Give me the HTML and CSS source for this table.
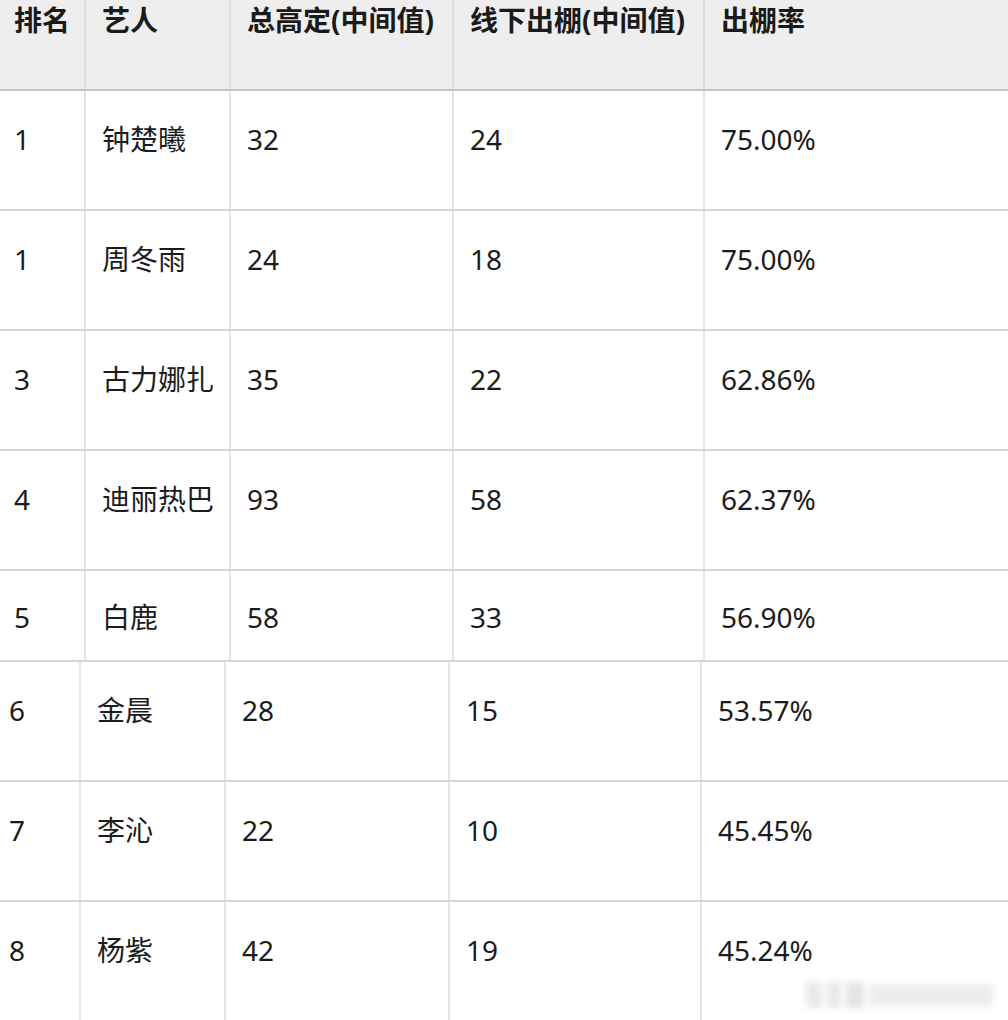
FILE: index.html
```html
<!DOCTYPE html>
<html lang="zh-CN">
<head>
<meta charset="utf-8">
<title>出棚率排名</title>
<link rel="stylesheet" href="styles.css">
</head>
<body>
<div class="page">
  <div class="table table-top">
    <div class="row head">
      <div class="cell">排名</div>
      <div class="cell">艺人</div>
      <div class="cell">总高定(中间值)</div>
      <div class="cell">线下出棚(中间值)</div>
      <div class="cell">出棚率</div>
    </div>
    <div class="row">
      <div class="cell">1</div><div class="cell">钟楚曦</div><div class="cell">32</div><div class="cell">24</div><div class="cell">75.00%</div>
    </div>
    <div class="row">
      <div class="cell">1</div><div class="cell">周冬雨</div><div class="cell">24</div><div class="cell">18</div><div class="cell">75.00%</div>
    </div>
    <div class="row">
      <div class="cell">3</div><div class="cell">古力娜扎</div><div class="cell">35</div><div class="cell">22</div><div class="cell">62.86%</div>
    </div>
    <div class="row">
      <div class="cell">4</div><div class="cell">迪丽热巴</div><div class="cell">93</div><div class="cell">58</div><div class="cell">62.37%</div>
    </div>
    <div class="row short">
      <div class="cell">5</div><div class="cell">白鹿</div><div class="cell">58</div><div class="cell">33</div><div class="cell">56.90%</div>
    </div>
  </div>
  <div class="table table-bottom">
    <div class="row">
      <div class="cell">6</div><div class="cell">金晨</div><div class="cell">28</div><div class="cell">15</div><div class="cell">53.57%</div>
    </div>
    <div class="row">
      <div class="cell">7</div><div class="cell">李沁</div><div class="cell">22</div><div class="cell">10</div><div class="cell">45.45%</div>
    </div>
    <div class="row">
      <div class="cell">8</div><div class="cell">杨紫</div><div class="cell">42</div><div class="cell">19</div><div class="cell">45.24%</div>
    </div>
  </div>
  <div class="watermark" aria-hidden="true">
    <span class="wm wm1"></span><span class="wm wm2"></span><span class="wm wm3"></span><span class="wm wm4"></span>
  </div>
</div>
</body>
</html>
```

FILE: styles.css
```css
html, body {
  margin: 0;
  padding: 0;
  background: #ffffff;
}
body {
  font-family: "Noto Sans", "Noto Sans CJK SC", sans-serif;
  color: #1c1c1c;
  font-size: 28px;
}
.page {
  position: relative;
  width: 1008px;
  height: 1020px;
  overflow: hidden;
}
.row {
  display: grid;
  box-sizing: border-box;
  height: 120px;
  border-bottom: 2px solid #d6d6d6;
}
.table-top .row {
  grid-template-columns: 86px 145px 223px 251px 1fr;
}
.table-bottom .row {
  grid-template-columns: 81px 145px 224px 252px 1fr;
}
.cell {
  box-sizing: border-box;
  padding: 29px 0 0 16px;
  line-height: 38px;
  border-right: 2px solid #e6e6e6;
  white-space: nowrap;
  overflow: hidden;
}
.cell:last-child {
  border-right: none;
}
.table-top .cell:first-child {
  padding-left: 14px;
}
.table-bottom .cell:first-child {
  padding-left: 9px;
}
.row.head {
  height: 91px;
  background: #eeeeee;
  border-bottom: 2px solid #c4c4c4;
  font-weight: 700;
  color: #1a1a1a;
}
.row.head .cell {
  padding-top: 1px;
  border-right-color: #dddddd;
}
.row.short {
  height: 91px;
}
.table-top .row.short .cell {
  padding-top: 27px;
}
.table-bottom .row:first-child .cell {
  padding-top: 29px;
}
.watermark {
  position: absolute;
  left: 806px;
  top: 980px;
  width: 192px;
  height: 30px;
  display: flex;
  gap: 5px;
  align-items: center;
  filter: blur(3px);
  opacity: 0.4;
}
.wm {
  display: block;
  height: 26px;
  background: #c8c8c8;
}
.wm1 { width: 16px; }
.wm2 { width: 14px; }
.wm3 { width: 18px; background: #bdbdbd; }
.wm4 { width: 124px; height: 22px; background: #d2d2d2; }
```
